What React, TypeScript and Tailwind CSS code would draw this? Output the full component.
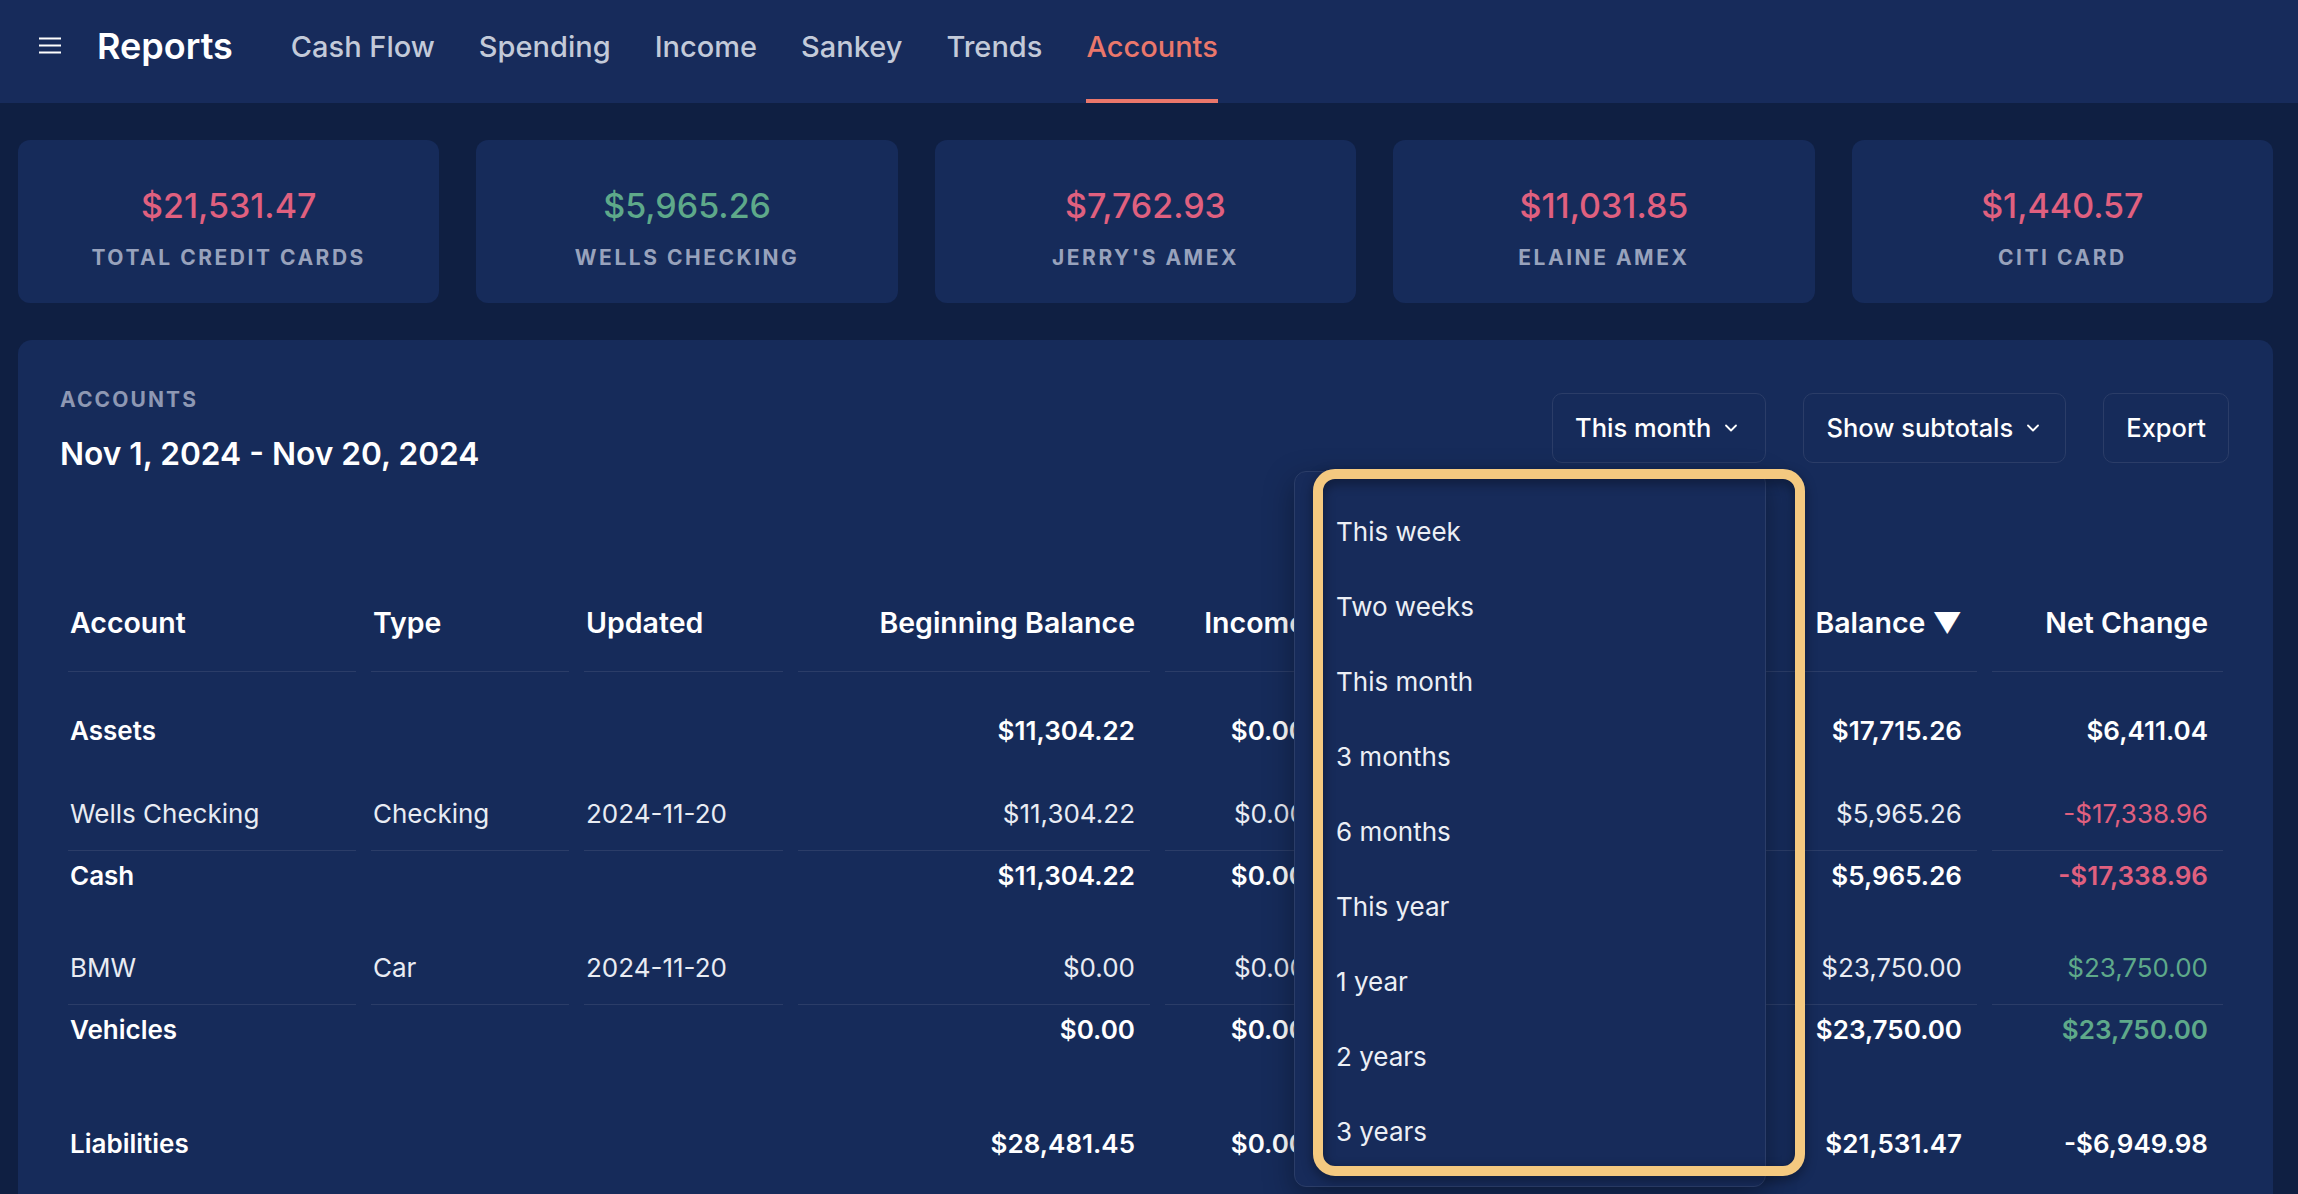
import { ChevronDown } from 'lucide-react';

type Tone = 'white' | 'pink' | 'green';

const toneClass: Record<Tone, string> = {
  white: 'text-white',
  pink: 'text-[#e0607f]',
  green: 'text-[#5ea98a]',
};

const summaryCards: { amount: string; label: string; tone: Tone }[] = [
  { amount: '$21,531.47', label: 'TOTAL CREDIT CARDS', tone: 'pink' },
  { amount: '$5,965.26', label: 'WELLS CHECKING', tone: 'green' },
  { amount: '$7,762.93', label: "JERRY'S AMEX", tone: 'pink' },
  { amount: '$11,031.85', label: 'ELAINE AMEX', tone: 'pink' },
  { amount: '$1,440.57', label: 'CITI CARD', tone: 'pink' },
];

const navItems = ['Cash Flow', 'Spending', 'Income', 'Sankey', 'Trends', 'Accounts'];

const ranges = [
  'This week',
  'Two weeks',
  'This month',
  '3 months',
  '6 months',
  'This year',
  '1 year',
  '2 years',
  '3 years',
];

type RowKind = 'group' | 'item' | 'subtotal';

interface TableRow {
  kind: RowKind;
  cells: string[];
  net: string;
  netTone: Tone;
}

const rows: TableRow[] = [
  { kind: 'group', cells: ['Assets', '', '', '$11,304.22', '$0.00', '$0.00', '$17,715.26'], net: '$6,411.04', netTone: 'white' },
  { kind: 'item', cells: ['Wells Checking', 'Checking', '2024-11-20', '$11,304.22', '$0.00', '$5,339.00', '$5,965.26'], net: '-$17,338.96', netTone: 'pink' },
  { kind: 'subtotal', cells: ['Cash', '', '', '$11,304.22', '$0.00', '$5,339.00', '$5,965.26'], net: '-$17,338.96', netTone: 'pink' },
  { kind: 'item', cells: ['BMW', 'Car', '2024-11-20', '$0.00', '$0.00', '$0.00', '$23,750.00'], net: '$23,750.00', netTone: 'green' },
  { kind: 'subtotal', cells: ['Vehicles', '', '', '$0.00', '$0.00', '$0.00', '$23,750.00'], net: '$23,750.00', netTone: 'green' },
  { kind: 'group', cells: ['Liabilities', '', '', '$28,481.45', '$0.00', '$0.00', '$21,531.47'], net: '-$6,949.98', netTone: 'white' },
];

const headers = ['Account', 'Type', 'Updated', 'Beginning Balance', 'Income', 'Expenses', 'Balance ▼', 'Net Change'];

function rowCellClass(kind: RowKind) {
  if (kind === 'group') return 'h-[105px] pt-[42px] font-semibold';
  if (kind === 'subtotal') return 'h-[80px] pt-[8px] font-semibold';
  return 'h-[74px] pt-[20px] border-b border-[#2b3d68] font-normal';
}

export default function App() {
  return (
    <div className="h-screen overflow-hidden bg-[#0f1f42] [font-family:Inter,'Noto_Sans',sans-serif] text-white">
      {/* Top bar */}
      <header className="h-[103px] bg-[#172b5b] flex items-stretch pl-[39px]">
        <div className="flex items-center pb-[12px]">
          <svg width="22" height="17" viewBox="0 0 22 17" className="text-white">
            <path d="M0 1.5h22M0 8.5h22M0 15.5h22" stroke="currentColor" strokeWidth="2" />
          </svg>
          <span className="ml-[36px] text-[36px] font-semibold leading-[40px]">Reports</span>
        </div>
        <nav className="ml-[58px] flex gap-[44px]">
          {navItems.map((item) => {
            const active = item === 'Accounts';
            return (
              <div key={item} className="relative flex items-center pb-[10px]">
                <span
                  className={`text-[29px] font-medium leading-[36px] ${
                    active ? 'text-[#ea776b]' : 'text-[#c3cad9]'
                  }`}
                >
                  {item}
                </span>
                {active && <span className="absolute left-0 right-0 bottom-0 h-[4px] bg-[#ea776b]" />}
              </div>
            );
          })}
        </nav>
      </header>

      {/* Summary cards */}
      <div className="flex gap-[37px] pl-[18px] pr-[25px] pt-[37px]">
        {summaryCards.map((card) => (
          <div
            key={card.label}
            className="flex-1 h-[163px] rounded-[12px] bg-[#162b5a] flex flex-col items-center pt-[46px]"
          >
            <div className={`text-[34px] font-medium leading-[40px] ${toneClass[card.tone]}`}>{card.amount}</div>
            <div className="mt-[20px] text-[21px] font-bold leading-[24px] tracking-[0.12em] text-[#98a2bc]">
              {card.label}
            </div>
          </div>
        ))}
      </div>

      {/* Accounts panel */}
      <section className="relative ml-[18px] mr-[25px] mt-[37px] rounded-[14px] bg-[#162b5a] pl-[42px] pr-[44px] pt-[48px] pb-[60px]">
        <div className="flex items-start justify-between">
          <div>
            <div className="text-[21px] font-bold leading-[24px] tracking-[0.1em] text-[#8e98b3]">ACCOUNTS</div>
            <div className="mt-[22px] text-[31.7px] font-semibold leading-[40px]">Nov 1, 2024 - Nov 20, 2024</div>
          </div>

          <div className="mt-[5px] flex gap-[37px]">
            <button className="h-[70px] flex items-center gap-[10px] rounded-[10px] border border-[#2b3d68] pl-[22px] pr-[24px] text-[25.5px] font-medium">
              This month
              <ChevronDown size={20} strokeWidth={2.2} />
            </button>
            <button className="h-[70px] flex items-center gap-[10px] rounded-[10px] border border-[#2b3d68] pl-[22px] pr-[22px] text-[25.5px] font-medium">
              Show subtotals
              <ChevronDown size={20} strokeWidth={2.2} />
            </button>
            <button className="h-[70px] flex items-center rounded-[10px] border border-[#2b3d68] px-[22px] text-[25.5px] font-medium">
              Export
            </button>
          </div>
        </div>

        {/* Range menu, open under "This month" */}
        <div className="absolute left-[1276px] top-[131px] z-10 w-[472px] h-[716px] rounded-[12px] border border-[#2b3d68] bg-[#172b5a] shadow-[0_10px_30px_rgba(0,0,0,0.35)] py-[22px]">
          {ranges.map((r) => (
            <div key={r} className="h-[75px] flex items-center pl-[41px] text-[26px] font-normal text-[#eceff5]">
              {r}
            </div>
          ))}
        </div>

        {/* Highlight ring */}
        <div className="absolute left-[1295px] top-[129px] z-20 w-[492px] h-[707px] rounded-[22px] border-[10px] border-[#f4c980] drop-shadow-[0_4px_6px_rgba(0,0,0,0.4)] pointer-events-none" />

        {/* Table */}
        <div className="ml-[8px] mt-[132px] grid grid-cols-[288px_198px_199px_352px_156px_300px_326px_231px] gap-x-[15px] text-[26px] leading-[34px]">
          {headers.map((h, i) => (
            <div
              key={h}
              className={`pb-[31px] border-b border-[#2b3d68] text-[28.5px] font-semibold ${
                i < 3 ? 'pl-[2px] text-left' : 'pr-[15px] text-right'
              }`}
            >
              {h}
            </div>
          ))}

          {rows.map((row, ri) => (
            <>
              {row.cells.map((c, i) => (
                <div
                  key={`${ri}-${i}`}
                  className={`${rowCellClass(row.kind)} ${
                    i < 3 ? 'pl-[2px] text-left' : 'pr-[15px] text-right'
                  } ${row.kind === 'item' ? 'text-[#e9ecf3]' : 'text-white'}`}
                >
                  {c}
                </div>
              ))}
              <div key={`${ri}-net`} className={`${rowCellClass(row.kind)} pr-[15px] text-right ${toneClass[row.netTone]}`}>
                {row.net}
              </div>
            </>
          ))}
        </div>
      </section>
    </div>
  );
}
